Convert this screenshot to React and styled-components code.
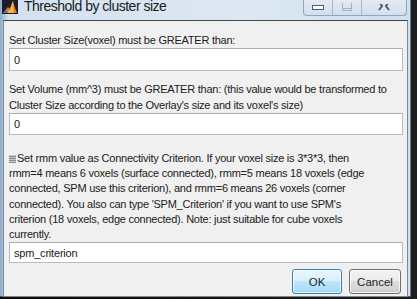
import React from "react";
import styled, { createGlobalStyle } from "styled-components";

const GlobalStyle = createGlobalStyle`
    html, body {
        margin: 0;
        padding: 0;
        background: #141414;
        overflow: hidden;
    }
`;

const Desktop = styled.div`
    width: 417px;
    height: 299px;
    display: flex;
    align-items: flex-start;
    background: linear-gradient(90deg, #0c0c0c 0%, #1d1d1d 100%);
`;

const Frame = styled.div`
    width: 411px;
    height: 297px;
    box-sizing: border-box;
    display: flex;
    flex-direction: column;
    padding: 0 2px 3px 3px;
    background: linear-gradient(90deg, #8fabc9 0%, #d3e1ef 2%, #dde8f3 60%, #cfdfee 100%);
    border-right: 1px solid #6d7c8c;
    border-bottom: 1px solid #4a5866;
`;

const TitleBar = styled.div`
    height: 20px;
    flex: none;
    display: flex;
    align-items: flex-start;
    gap: 6px;
`;

const AppIcon = styled.svg`
    width: 16px;
    height: 14px;
    flex: none;
    margin-left: -1px;
`;

const Title = styled.span`
    font-family: "Liberation Sans", Arial, sans-serif;
    font-size: 14px;
    letter-spacing: -0.5px;
    line-height: 14px;
    color: #1b1b1b;
    margin-top: -1px;
`;

const CaptionButtons = styled.div`
    margin-left: auto;
    margin-right: 1px;
    display: flex;
    height: 15px;
    border: 1px solid #93a5b8;
    border-top: none;
    border-radius: 0 0 4px 4px;
    background: linear-gradient(#e3ebf3, #d2dfec);
    overflow: hidden;
`;

const CaptionButton = styled.div`
    width: ${(p) => p.w}px;
    display: flex;
    align-items: center;
    justify-content: center;
    border-left: ${(p) => (p.first ? "none" : "1px solid #a9b8c8")};
`;

const Client = styled.div`
    flex: 1;
    display: flex;
    flex-direction: column;
    background: #f0f0f0;
    border: 1px solid #7c8896;
    border-top-color: #3d4650;
    padding: 12px 5px 2px 5px;
    font-family: "Liberation Sans", Arial, sans-serif;
    font-size: 11px;
    letter-spacing: -0.24px;
    color: #202020;
`;

const Label = styled.div`
    line-height: ${(p) => p.lh || 15}px;
    white-space: nowrap;
    margin-top: ${(p) => p.top || 0}px;
`;

const Field = styled.input`
    box-sizing: border-box;
    width: 394px;
    height: ${(p) => p.h || 23}px;
    flex: none;
    margin: 0;
    padding: 0 4px;
    border: 1px solid #b7bcc2;
    border-top-color: #abadb3;
    background: #ffffff;
    font-family: "Liberation Sans", Arial, sans-serif;
    font-size: 11px;
    letter-spacing: -0.2px;
    color: #202020;
    outline: none;
`;

const Glyph = styled.span`
    display: inline-block;
    width: 7px;
    height: 8px;
    margin-right: 1px;
    background: repeating-linear-gradient(0deg, #8c8c8c 0 1px, #c8c8c8 1px 2px);
    vertical-align: -1px;
`;

const ButtonRow = styled.div`
    display: flex;
    justify-content: flex-end;
    gap: 7px;
    margin-top: 6px;
    padding-right: 1px;
`;

const Button = styled.button`
    width: ${(p) => p.w}px;
    height: 25px;
    border-radius: 3px;
    font-family: "Liberation Sans", Arial, sans-serif;
    font-size: 11.5px;
    color: #1e1e1e;
    border: 1px solid ${(p) => (p.primary ? "#3c7fb1" : "#707070")};
    background: ${(p) =>
        p.primary
            ? "linear-gradient(#eaf6fd 0%, #d9f0fc 45%, #bee6fd 50%, #a7d9f5 100%)"
            : "linear-gradient(#f2f2f2 0%, #ebebeb 45%, #dddddd 50%, #cfcfcf 100%)"};
    box-shadow: inset 0 0 0 1px rgba(255, 255, 255, 0.7);
    padding: 0;
`;

const App = () => {
    return (
        <>
            <GlobalStyle />
            <Desktop>
                <Frame>
                    <TitleBar>
                        <AppIcon viewBox="0 0 16 14">
                            <rect width="16" height="14" fill="#1c1c2a" />
                            <path d="M1 13 L6 7 L8 9 L11 1 L13 8 L15 13 Z" fill="#e07a1e" />
                            <path d="M5 13 L8 9 L11 1 L12 13 Z" fill="#f4b33c" />
                            <path d="M1 13 L4 10 L6 13 Z" fill="#3a7ad0" />
                        </AppIcon>
                        <Title>Threshold by cluster size</Title>
                        <CaptionButtons>
                            <CaptionButton first w={28}>
                                <svg width="12" height="8" viewBox="0 0 12 8">
                                    <rect x="0.5" y="1.5" width="11" height="4" fill="#fff" stroke="#4d5b69" />
                                </svg>
                            </CaptionButton>
                            <CaptionButton w={28}>
                                <svg width="10" height="10" viewBox="0 0 10 10">
                                    <rect x="0.5" y="-2" width="9" height="9.5" fill="none" stroke="#a4b0bd" />
                                    <line x1="0.5" y1="5.5" x2="9.5" y2="5.5" stroke="#a4b0bd" />
                                </svg>
                            </CaptionButton>
                            <CaptionButton w={44}>
                                <svg width="12" height="8" viewBox="0 0 12 8">
                                    <path d="M1 -2 L4 2 L1 6 M11 -2 L8 2 L11 6" fill="none" stroke="#4d5b69" strokeWidth="2" />
                                </svg>
                            </CaptionButton>
                        </CaptionButtons>
                    </TitleBar>
                    <Client>
                        <Label>Set Cluster Size(voxel) must be GREATER than:</Label>
                        <Field defaultValue="0" />
                        <Label top={10} lh={16}>
                            Set Volume (mm^3) must be GREATER than: (this value would be transformed to
                            <br />
                            Cluster Size according to the Overlay's size and its voxel's size)
                        </Label>
                        <Field defaultValue="0" h={22} />
                        <Label top={16} lh={15.2}>
                            <Glyph />
                            Set rmm value as Connectivity Criterion. If your voxel size is 3*3*3, then
                            <br />
                            rmm=4 means 6 voxels (surface connected), rmm=5 means 18 voxels (edge
                            <br />
                            connected, SPM use this criterion), and rmm=6 means 26 voxels (corner
                            <br />
                            connected). You also can type 'SPM_Criterion' if you want to use SPM's
                            <br />
                            criterion (18 voxels, edge connected). Note: just suitable for cube voxels
                            <br />
                            currently.
                        </Label>
                        <Field defaultValue="spm_criterion" h={21} />
                        <ButtonRow>
                            <Button primary w={50}>OK</Button>
                            <Button w={52}>Cancel</Button>
                        </ButtonRow>
                    </Client>
                </Frame>
            </Desktop>
        </>
    );
};

export default App;
